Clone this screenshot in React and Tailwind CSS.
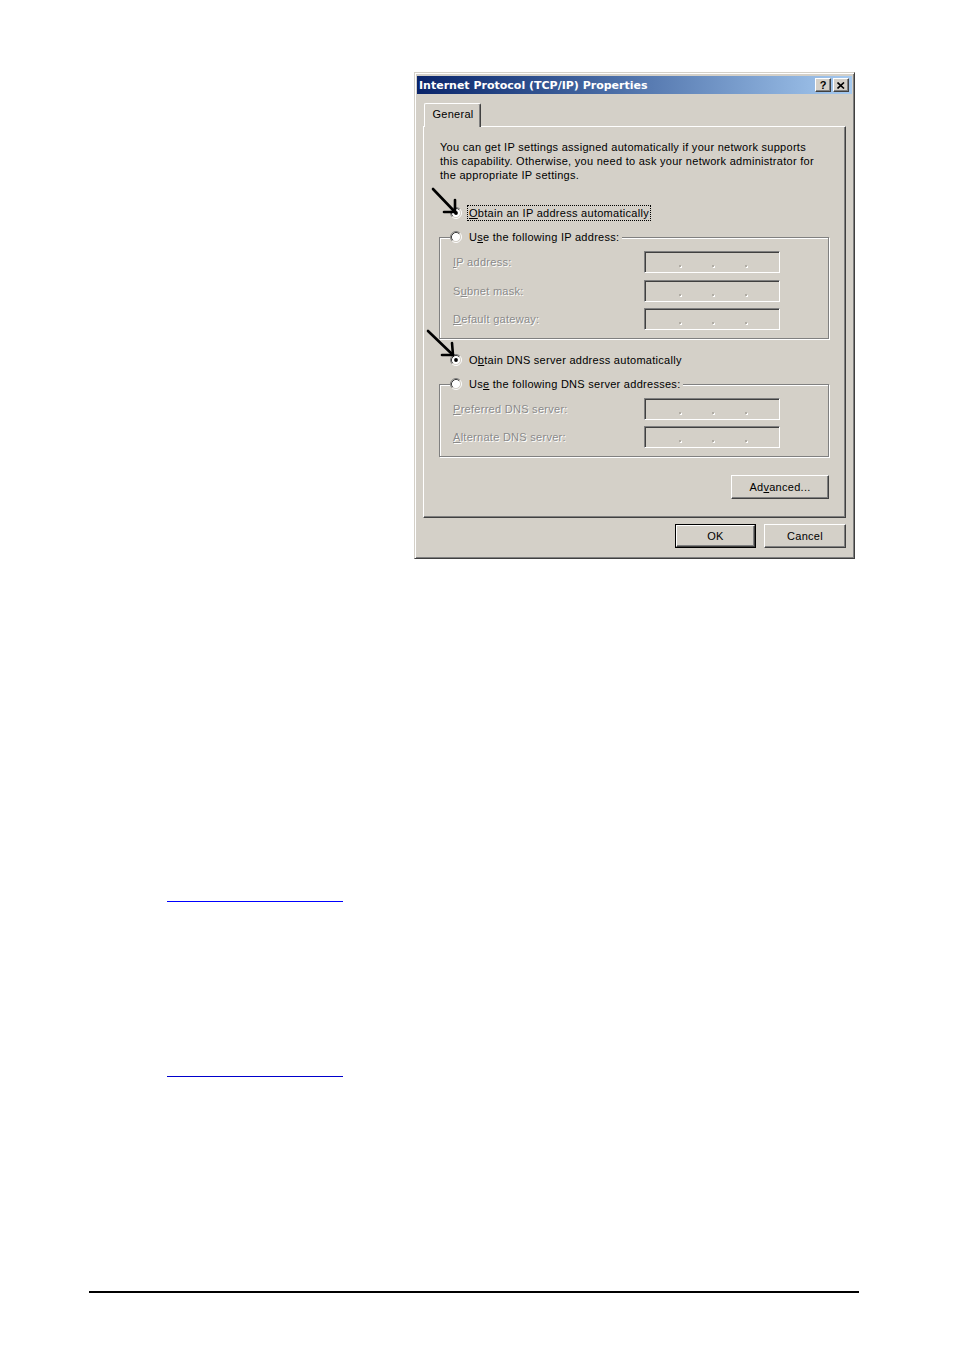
import React from "react";

const FONT = { fontFamily: '"Liberation Sans", Arial, sans-serif' };

function Radio({ checked }) {
  return (
    <svg width="12" height="12" viewBox="0 0 12 12" className="shrink-0 block">
      <circle cx="6" cy="6" r="4.5" fill="#ffffff" />
      <path d="M2.11 9.89 A5.5 5.5 0 0 1 9.89 2.11" fill="none" stroke="#808080" strokeWidth="1" />
      <path d="M9.89 2.11 A5.5 5.5 0 0 1 2.11 9.89" fill="none" stroke="#ffffff" strokeWidth="1" />
      <path d="M2.82 9.18 A4.5 4.5 0 0 1 9.18 2.82" fill="none" stroke="#404040" strokeWidth="1" />
      <path d="M9.18 2.82 A4.5 4.5 0 0 1 2.82 9.18" fill="none" stroke="#d4d0c8" strokeWidth="1" />
      {checked && <circle cx="6" cy="6" r="1.9" fill="#000000" />}
    </svg>
  );
}

function IpBox() {
  return (
    <div className="w-[136px] h-[22px] bg-[#d4d0c8] border border-t-[#808080] border-l-[#808080] border-b-white border-r-white shadow-[inset_1px_1px_0_#404040,inset_-1px_-1px_0_#d4d0c8] flex items-end pb-[5px] pl-[34px] gap-[31px]">
      <span className="w-[2px] h-[2px] bg-[#b0aca4] shadow-[1px_1px_0_#ffffff]" />
      <span className="w-[2px] h-[2px] bg-[#b0aca4] shadow-[1px_1px_0_#ffffff]" />
      <span className="w-[2px] h-[2px] bg-[#b0aca4] shadow-[1px_1px_0_#ffffff]" />
    </div>
  );
}

function Field({ pre, u, post }) {
  return (
    <div className="h-[22px] flex items-center">
      <div className="w-[191px] text-[11px] leading-[14px] text-[#8a8a8a] [text-shadow:1px_1px_0_#ffffff]">
        {pre}
        <u className="underline-offset-[1px]">{u}</u>
        {post}
      </div>
      <IpBox />
    </div>
  );
}

function Button({ children, w, isDefault }) {
  const inner = (
    <div className="h-full flex items-center justify-center bg-[#d4d0c8] border border-t-white border-l-white border-b-[#404040] border-r-[#404040] shadow-[inset_-1px_-1px_0_#808080,inset_1px_1px_0_#d4d0c8] text-[11px] tracking-[0.28px] text-black">
      {children}
    </div>
  );
  if (isDefault) {
    return <div className={`${w} h-[24px] border border-black`}>{inner}</div>;
  }
  return <div className={`${w} h-[24px]`}>{inner}</div>;
}

function TitleButton({ children }) {
  return (
    <div className="w-[16px] h-[14px] bg-[#d4d0c8] border border-t-white border-l-white border-b-[#404040] border-r-[#404040] shadow-[inset_-1px_-1px_0_#808080] flex items-center justify-center text-black">
      {children}
    </div>
  );
}

export default function App() {
  return (
    <div className="relative w-[954px] h-[1350px] bg-white overflow-hidden" style={FONT}>
      {/* Dialog */}
      <div className="ml-[414px] pt-[72px]">
        <div className="w-[441px] h-[487px] bg-[#d4d0c8] border border-t-[#d4d0c8] border-l-[#d4d0c8] border-b-[#404040] border-r-[#404040] shadow-[inset_1px_1px_0_#ffffff,inset_-1px_-1px_0_#808080] px-[2px] pt-[3px]">
          {/* Title bar */}
          <div className="h-[18px] bg-linear-to-r from-[#0a246a] to-[#a6caf0] flex items-center pl-[2px] pr-[3px]">
            <span
              className="text-white font-bold text-[11px] leading-none flex-1"
              style={{ fontFamily: '"DejaVu Sans", Verdana, sans-serif' }}
            >
              Internet Protocol (TCP/IP) Properties
            </span>
            <div className="flex gap-[2px]">
              <TitleButton>
                <span className="text-[11px] font-bold leading-none">?</span>
              </TitleButton>
              <TitleButton>
                <svg width="8" height="7" viewBox="0 0 8 7">
                  <path d="M0.5 0.5 L7 6.5 M7 0.5 L0.5 6.5" stroke="#000" strokeWidth="1.6" />
                </svg>
              </TitleButton>
            </div>
          </div>

          <div className="px-[6px] pt-[9px]">
            {/* Tab */}
            <div className="h-[23px] flex pl-[1px]">
              <div className="relative z-10 w-[57px] h-[24px] bg-[#d4d0c8] border-t border-l border-r border-t-white border-l-white border-r-[#404040] rounded-t-[2px] shadow-[inset_-1px_0_0_#808080] flex items-center justify-center text-[11px] tracking-[0.28px] text-black pb-[2px] pl-[1px]">
                General
              </div>
            </div>
            {/* Panel */}
            <div className="h-[392px] border border-t-white border-l-white border-b-[#404040] border-r-[#404040] shadow-[inset_-1px_-1px_0_#808080] pl-[16px] pr-[15px] pt-[13px] text-[11px] tracking-[0.28px] text-black">
              <p className="leading-[14px]">
                You can get IP settings assigned automatically if your network supports
                <br />
                this capability. Otherwise, you need to ask your network administrator for
                <br />
                the appropriate IP settings.
              </p>

              <div className="mt-[23px] h-[16px] flex items-center pl-[10px]">
                <Radio checked />
                <span className="ml-[5px] px-[1px] leading-[14px] border border-dotted border-black">
                  <u className="underline-offset-[1px]">O</u>btain an IP address automatically
                </span>
              </div>

              <fieldset className="mt-[8px] -ml-[1px] w-[390px] border border-[#808080] shadow-[1px_1px_0_#ffffff,inset_1px_1px_0_#ffffff] pl-[13px] pt-[6px] pb-[8px]">
                <legend className="ml-[-3px] pr-[3px] h-[16px] flex items-center bg-[#d4d0c8]">
                  <Radio />
                  <span className="ml-[7px] leading-[14px]">
                    U<u className="underline-offset-[1px]">s</u>e the following IP address:
                  </span>
                </legend>
                <div className="flex flex-col gap-[6.5px]">
                  <Field pre="" u="I" post="P address:" />
                  <Field pre="S" u="u" post="bnet mask:" />
                  <Field pre="" u="D" post="efault gateway:" />
                </div>
              </fieldset>

              <div className="mt-[13px] h-[16px] flex items-center pl-[10px]">
                <Radio checked />
                <span className="ml-[7px] leading-[14px]">
                  O<u className="underline-offset-[1px]">b</u>tain DNS server address automatically
                </span>
              </div>

              <fieldset className="mt-[8px] -ml-[1px] w-[390px] border border-[#808080] shadow-[1px_1px_0_#ffffff,inset_1px_1px_0_#ffffff] pl-[13px] pt-[6px] pb-[8px]">
                <legend className="ml-[-3px] pr-[3px] h-[16px] flex items-center bg-[#d4d0c8]">
                  <Radio />
                  <span className="ml-[7px] leading-[14px]">
                    Us<u className="underline-offset-[1px]">e</u> the following DNS server addresses:
                  </span>
                </legend>
                <div className="flex flex-col gap-[6px]">
                  <Field pre="" u="P" post="referred DNS server:" />
                  <Field pre="" u="A" post="lternate DNS server:" />
                </div>
              </fieldset>

              <div className="mt-[18px] -ml-[1px] w-[390px] flex justify-end">
                <Button w="w-[98px]">
                  <span>
                    Ad<u className="underline-offset-[1px]">v</u>anced...
                  </span>
                </Button>
              </div>
            </div>

            {/* Bottom buttons */}
            <div className="mt-[6px] flex justify-end gap-[8px]">
              <Button w="w-[81px]" isDefault>
                OK
              </Button>
              <Button w="w-[82px]">Cancel</Button>
            </div>
          </div>
        </div>
      </div>

      {/* Arrows overlaid on dialog */}
      <svg className="absolute left-0 top-0 pointer-events-none" width="954" height="600" viewBox="0 0 954 600">
        <g stroke="#000" strokeWidth="2.6" strokeLinecap="round" fill="none">
          <path d="M433 189 L455 212" />
          <path d="M455 212 L455 200" />
          <path d="M455 212 L444 212" />
          <path d="M428 331 L453 355" />
          <path d="M453 355 L452 343" />
          <path d="M453 355 L442 355" />
        </g>
      </svg>

      {/* Blue rules */}
      <div className="ml-[167px] mt-[342px] w-[176px] h-[1px] bg-[#0000ff]" />
      <div className="ml-[167px] mt-[174px] w-[176px] h-[1px] bg-[#0000cc]" />

      {/* Footer rule */}
      <div className="ml-[89px] mt-[214px] w-[770px] h-[2px] bg-black" />
    </div>
  );
}
